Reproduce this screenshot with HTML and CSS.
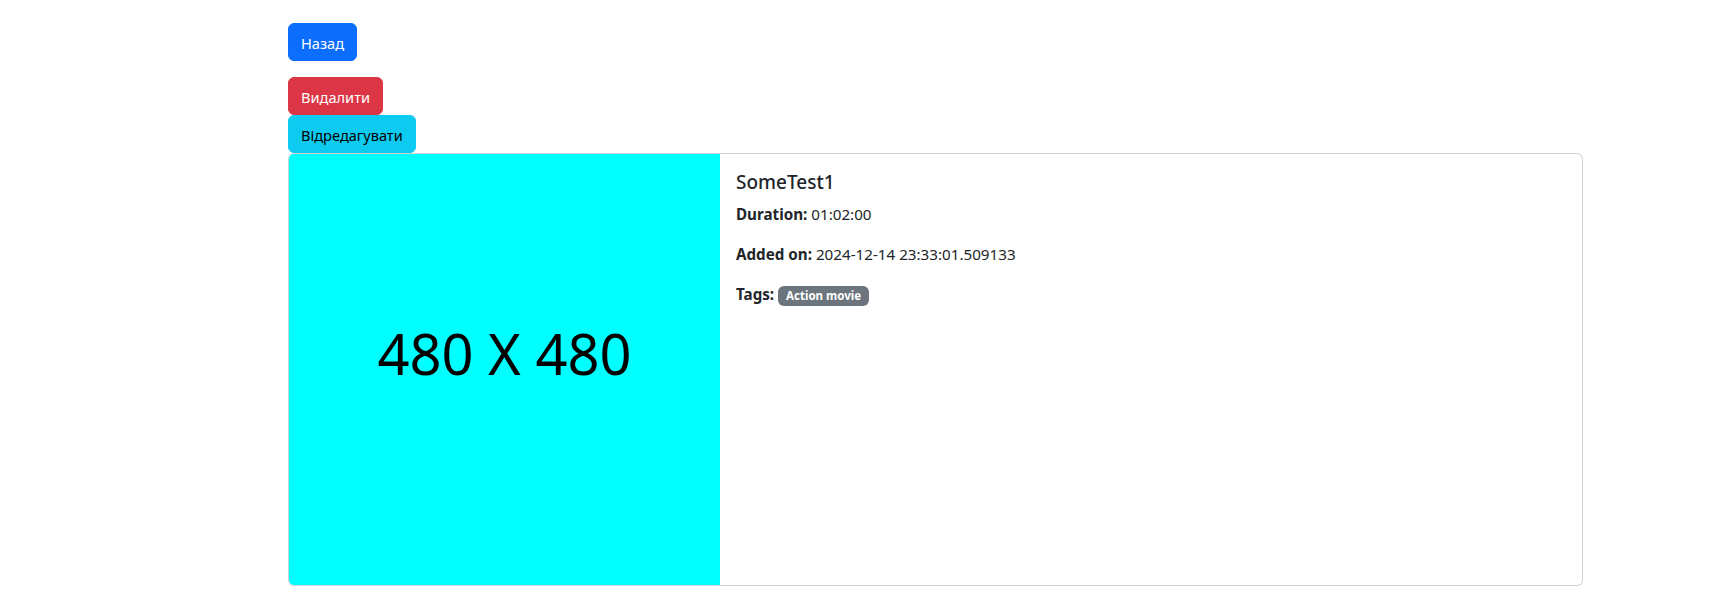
FILE: index.html
```html
<!DOCTYPE html>
<html lang="uk">
<head>
<meta charset="utf-8">
<title>SomeTest1</title>
<link rel="stylesheet" href="styles.css">
</head>
<body>
<main class="page">
  <div class="back-row">
    <button class="btn btn-primary">Назад</button>
  </div>
  <div class="actions">
    <button class="btn btn-danger">Видалити</button>
    <button class="btn btn-info">Відредагувати</button>
  </div>
  <div class="card">
    <div class="card-img">
      <span class="placeholder-text">480 X 480</span>
    </div>
    <div class="card-body">
      <h5 class="card-title">SomeTest1</h5>
      <p class="card-text"><strong>Duration:</strong> 01:02:00</p>
      <p class="card-text"><strong>Added on:</strong> 2024-12-14 23:33:01.509133</p>
      <p class="card-text"><strong>Tags:</strong> <span class="badge">Action movie</span></p>
    </div>
  </div>
</main>
</body>
</html>
```

FILE: styles.css
```css
* { box-sizing: border-box; }
html, body { margin: 0; padding: 0; background: #fff; }
body {
  font-family: "Noto Sans", "Open Sans", "Liberation Sans", sans-serif;
  font-size: 16px;
  line-height: 1.5;
  color: #212529;
}
.page {
  width: 1583px;
  padding: 23px 0 0 288px;
}
.back-row { margin-bottom: 16px; }
.actions {
  display: flex;
  flex-direction: column;
  align-items: flex-start;
}
.btn {
  display: inline-block;
  font-family: inherit;
  font-size: 14.6px;
  line-height: 24px;
  padding: 7px 12px;
  border: 1px solid transparent;
  border-radius: 6px;
  cursor: pointer;
  height: 38px;
}
.btn-primary { background: #0d6efd; border-color: #0d6efd; color: #fff; }
.btn-danger { background: #dc3545; border-color: #dc3545; color: #fff; }
.btn-info { background: #0dcaf0; border-color: #0dcaf0; color: #000; }
.card {
  display: flex;
  border: 1px solid rgba(0,0,0,.175);
  border-radius: 6px;
  height: 433px;
  background: #fff;
}
.card-img {
  width: 431px;
  flex: 0 0 431px;
  height: 431px;
  background: #00ffff;
  border-radius: 5px 0 0 5px;
  display: flex;
  align-items: center;
  justify-content: center;
  padding-bottom: 34px;
}
.placeholder-text {
  font-size: 56px;
  color: #000;
  line-height: 1;
}
.card-body {
  flex: 1;
  padding: 16px;
}
.card-title {
  margin: 0 0 8px;
  font-size: 19px;
  font-weight: 500;
  line-height: 24px;
}
.card-text {
  margin: 0 0 16px;
  font-size: 15.2px;
  line-height: 24px;
}
.card-text strong { font-weight: 700; }
.badge {
  display: inline-block;
  background: #6c757d;
  color: #fff;
  font-size: 11.5px;
  font-weight: 700;
  line-height: 1;
  padding: 4px 8px;
  border-radius: 6px;
  vertical-align: baseline;
}
```
